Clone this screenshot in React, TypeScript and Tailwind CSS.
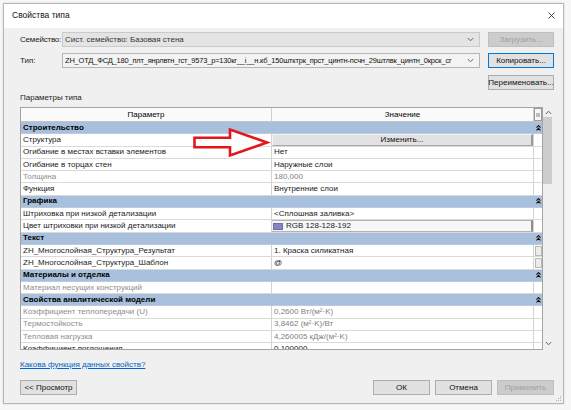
import React from "react";

type Row =
  | { kind: "group"; label: string }
  | {
      kind: "item";
      label: string;
      value?: React.ReactNode;
      muted?: boolean;
      side?: boolean;
    };

function EditButton() {
  return (
    <div className="h-full w-full flex items-center justify-center bg-[#e2e2e2] border-t border-l border-t-[#f4f4f4] border-l-[#f4f4f4] border-r-2 border-b border-r-[#9a9a9a] border-b-[#a8a8a8] text-[#111]">
      Изменить...
    </div>
  );
}

function ColorField() {
  return (
    <div className="h-full w-full flex items-center gap-[3px] pl-[1px] bg-[#f6f6f6] border-t border-b border-[#b4b4b4] border-r-2 border-r-[#8f8f8f]">
      <span className="w-[10px] h-[7px] bg-[#8585c4] border border-[#6b6bae]" />
      <span>RGB 128-128-192</span>
    </div>
  );
}

const rows: Row[] = [
  { kind: "group", label: "Строительство" },
  { kind: "item", label: "Структура", value: <EditButton /> },
  { kind: "item", label: "Огибание в местах вставки элементов", value: "Нет" },
  { kind: "item", label: "Огибание в торцах стен", value: "Наружные слои" },
  { kind: "item", label: "Толщина", value: "180,000", muted: true },
  { kind: "item", label: "Функция", value: "Внутренние слои" },
  { kind: "group", label: "Графика" },
  { kind: "item", label: "Штриховка при низкой детализации", value: "<Сплошная заливка>" },
  { kind: "item", label: "Цвет штриховки при низкой детализации", value: <ColorField /> },
  { kind: "group", label: "Текст" },
  { kind: "item", label: "ZH_Многослойная_Структура_Результат", value: "1. Краска силикатная", side: true },
  { kind: "item", label: "ZH_Многослойная_Структура_Шаблон", value: "@", side: true },
  { kind: "group", label: "Материалы и отделка" },
  { kind: "item", label: "Материал несущих конструкций", value: "", muted: true },
  { kind: "group", label: "Свойства аналитической модели" },
  { kind: "item", label: "Коэффициент теплопередачи (U)", value: "0,2600 Вт/(м²·K)", muted: true },
  { kind: "item", label: "Термостойкость", value: "3,8462 (м²·K)/Вт", muted: true },
  { kind: "item", label: "Тепловая нагрузка", value: "4,260005 кДж/(м²·K)", muted: true },
  { kind: "item", label: "Коэффициент поглощения", value: "0,100000" },
];

function Collapse() {
  return (
    <svg width="5" height="6" viewBox="0 0 5 6" className="block">
      <path d="M0.5 2.6 L2.5 0.6 L4.5 2.6 M0.5 5.4 L2.5 3.4 L4.5 5.4" fill="none" stroke="#111" strokeWidth="1.1" />
    </svg>
  );
}

function Chevron({ up, color = "#555" }: { up?: boolean; color?: string }) {
  return (
    <svg width="7" height="5" viewBox="0 0 7 5" className="block">
      <path d={up ? "M0.8 4 L3.5 1.2 L6.2 4" : "M0.8 1 L3.5 3.8 L6.2 1"} fill="none" stroke={color} strokeWidth="1" />
    </svg>
  );
}

function Button({
  children,
  disabled,
  focused,
  w = "w-[66px]",
}: {
  children: React.ReactNode;
  disabled?: boolean;
  focused?: boolean;
  w?: string;
}) {
  const tone = disabled
    ? "bg-[#cccccc] border-[#bfbfbf] text-[#a0a0a0]"
    : focused
    ? "bg-[#e1e1e1] border-[#0078d7] text-[#111]"
    : "bg-[#e1e1e1] border-[#adadad] text-[#111]";
  return (
    <div className={`${w} h-[15px] shrink-0 flex items-center justify-center border ${tone}`}>{children}</div>
  );
}

function Combo({ text, disabled, tight }: { text: string; disabled?: boolean; tight?: boolean }) {
  return (
    <div
      className={`w-[418px] h-[15px] flex items-center border pl-[2px] pr-[5px] ${
        disabled ? "bg-[#e4e4e4] border-[#cacaca] text-[#333]" : "bg-[#f3f3f3] border-[#b5b5b5] text-[#111]"
      }`}
    >
      <div
        className={`flex-1 overflow-hidden whitespace-nowrap leading-[12px] ${
          tight ? "text-[7.5px] tracking-[-0.2px]" : ""
        }`}
      >
        {text}
      </div>
      <div className="ml-[4px] shrink-0">
        <Chevron color="#666" />
      </div>
    </div>
  );
}

function Grid() {
  return (
    <div className="w-[523px] h-[243px] border border-[#a3a3a3] flex flex-col overflow-hidden bg-white">
      <div className="h-[14px] shrink-0 flex border-b border-[#c4c4c4] bg-[#fbfbfb]">
        <div className="w-[251px] border-r border-[#cfcfcf] flex items-center justify-center">Параметр</div>
        <div className="w-[262px] border-r border-[#cfcfcf] flex items-center justify-center">Значение</div>
        <div className="w-[8px] flex items-center justify-center border border-[#9a9a9a] bg-[#f7f7f7]">
          <svg width="4" height="4" viewBox="0 0 4 4" className="block">
            <path d="M0 1 H4 M0 3 H4" stroke="#555" strokeWidth="0.7" />
          </svg>
        </div>
      </div>
      {rows.map((r, i) =>
        r.kind === "group" ? (
          <div
            key={i}
            className="h-[12.3px] shrink-0 flex items-center bg-[#a8c0dc] border-b border-[#b9cbe1] font-bold text-black"
          >
            <div className="flex-1 pl-[2px]">{r.label}</div>
            <div className="w-[8px] flex justify-center">
              <Collapse />
            </div>
          </div>
        ) : (
          <div key={i} className="h-[12.3px] shrink-0 flex border-b border-[#dadada]">
            <div
              className={`w-[251px] border-r border-[#d3d3d3] flex items-center pl-[2px] whitespace-nowrap ${
                r.muted ? "text-[#8d8d8d]" : "text-[#1a1a1a]"
              }`}
            >
              {r.label}
            </div>
            <div
              className={`w-[262px] border-r border-[#d3d3d3] flex items-center whitespace-nowrap ${
                typeof r.value === "string" ? "pl-[2px]" : ""
              } ${r.muted ? "text-[#7f7f7f]" : "text-[#1a1a1a]"}`}
            >
              {r.value}
            </div>
            <div className="w-[8px] flex items-center justify-center">
              {r.side ? <div className="w-[7px] h-[10px] bg-[#ececec] border border-[#b8b8b8]" /> : null}
            </div>
          </div>
        )
      )}
    </div>
  );
}

function ScrollBar() {
  return (
    <div className="w-[10px] h-[243px] flex flex-col bg-[#f0f0f0] pt-[1px]">
      <div className="h-[9px] flex items-center justify-center">
        <Chevron up color="#606060" />
      </div>
      <div className="h-[67px] w-[9px] bg-[#cdcdcd]" />
      <div className="flex-1" />
      <div className="h-[12px] flex items-center justify-center pb-[2px]">
        <Chevron color="#606060" />
      </div>
    </div>
  );
}

export default function App() {
  return (
    <div className="relative w-[571px] h-[410px] overflow-hidden bg-[#f7f7f7] pt-[3px] pl-[3px] font-['Liberation_Sans',Arial,sans-serif] text-[8px] leading-none text-black">
      <div className="relative w-[561px] h-[401px] border border-[#b7b7b7] bg-[#f0f0f0] flex flex-col shadow-[0_0_2px_rgba(0,0,0,0.15)]">
        {/* title bar */}
        <div className="h-[24px] shrink-0 bg-white flex items-center pl-[8px] pr-[8px] pb-[2px]">
          <div className="flex-1 text-[8.5px] text-[#111]">Свойства типа</div>
          <svg width="7" height="7" viewBox="0 0 7 7" className="block">
            <path d="M0.5 0.5 L6.5 6.5 M6.5 0.5 L0.5 6.5" stroke="#333" strokeWidth="0.9" />
          </svg>
        </div>

        {/* body */}
        <div className="flex-1 flex flex-col pl-[16px] pr-[9px] pt-[4px]">
          <div className="h-[15px] flex items-center">
            <div className="w-[42px] text-[#222] tracking-[-0.2px]">Семейство:</div>
            <Combo text="Сист. семейство: Базовая стена" disabled />
            <div className="ml-[8px]">
              <Button disabled>Загрузить...</Button>
            </div>
          </div>
          <div className="mt-[6px] h-[15px] flex items-center">
            <div className="w-[42px] text-[#222]">Тип:</div>
            <Combo
              tight
              text="ZH_ОТД_ФСД_180_плт_янрлвтн_гст_9573_р=130кг__і__н.кб_150штктрк_прст_цинтн-псчн_29штлвк_цинтн_0крск_сг"
            />
            <div className="ml-[8px]">
              <Button focused>Копировать...</Button>
            </div>
          </div>
          <div className="mt-[7px] h-[15px] flex justify-end">
            <Button>Переименовать...</Button>
          </div>

          <div className="mt-[3px] leading-[10px] text-[#222]">Параметры типа</div>

          <div className="mt-[4px] flex">
            <Grid />
            <ScrollBar />
          </div>

          <div className="mt-[10px] leading-[10px]">
            <span className="text-[#0066cc] underline">Какова функция данных свойств?</span>
          </div>

          <div className="mt-[10px] flex items-center">
            <Button w="w-[57px]">&lt;&lt; Просмотр</Button>
            <div className="flex-1" />
            <div className="flex gap-[5px]">
              <Button w="w-[57px]">ОК</Button>
              <Button w="w-[57px]">Отмена</Button>
              <Button w="w-[57px]" disabled>
                Применить
              </Button>
            </div>
          </div>
        </div>

        {/* resize grip */}
        <svg width="6" height="6" viewBox="0 0 6 6" className="absolute right-[1px] bottom-[1px] block">
          <rect x="4" y="0" width="1" height="1" fill="#b0b0b0" />
          <rect x="2" y="2" width="1" height="1" fill="#b0b0b0" />
          <rect x="4" y="2" width="1" height="1" fill="#b0b0b0" />
          <rect x="0" y="4" width="1" height="1" fill="#b0b0b0" />
          <rect x="2" y="4" width="1" height="1" fill="#b0b0b0" />
          <rect x="4" y="4" width="1" height="1" fill="#b0b0b0" />
        </svg>
      </div>

      {/* callout arrow pointing at the edit button */}
      <svg width="82" height="36" viewBox="0 0 82 36" className="absolute left-[190px] top-[125px] block pointer-events-none">
        <path
          d="M4.5 12.8 L40 12.8 L40 4.5 L77 17.5 L40 30.5 L40 22.3 L4.5 22.3 Z"
          fill="#ffffff"
          stroke="#e3161c"
          strokeWidth="2.6"
          strokeLinejoin="miter"
        />
      </svg>
    </div>
  );
}
